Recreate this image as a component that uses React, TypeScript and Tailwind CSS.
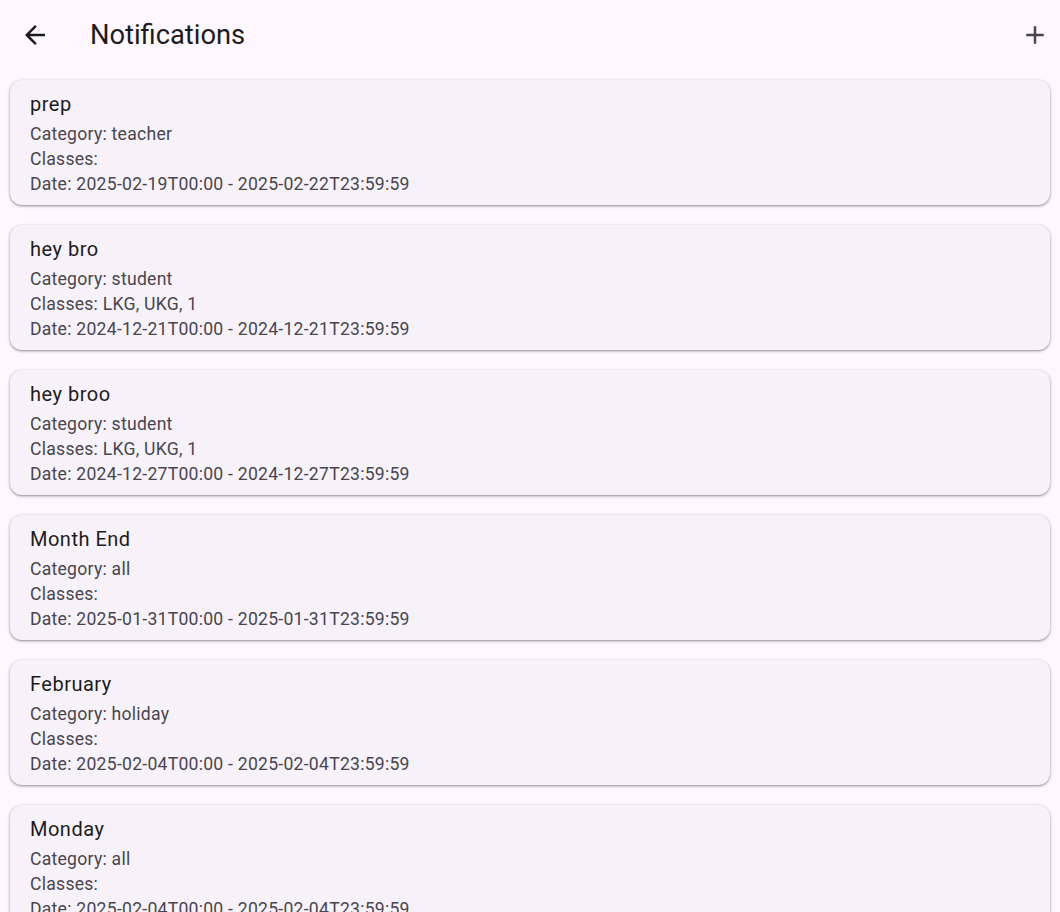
type Notice = {
  title: string;
  category: string;
  classes: string;
  date: string;
};

const notices: Notice[] = [
  { title: "prep", category: "teacher", classes: "", date: "2025-02-19T00:00 - 2025-02-22T23:59:59" },
  { title: "hey bro", category: "student", classes: "LKG, UKG, 1", date: "2024-12-21T00:00 - 2024-12-21T23:59:59" },
  { title: "hey broo", category: "student", classes: "LKG, UKG, 1", date: "2024-12-27T00:00 - 2024-12-27T23:59:59" },
  { title: "Month End", category: "all", classes: "", date: "2025-01-31T00:00 - 2025-01-31T23:59:59" },
  { title: "February", category: "holiday", classes: "", date: "2025-02-04T00:00 - 2025-02-04T23:59:59" },
  { title: "Monday", category: "all", classes: "", date: "2025-02-04T00:00 - 2025-02-04T23:59:59" },
];

function BackArrow() {
  return (
    <svg width="30" height="30" viewBox="0 0 24 24" fill="#1d1b20">
      <path d="M20 11H7.83l5.59-5.59L12 4l-8 8 8 8 1.41-1.41L7.83 13H20v-2z" />
    </svg>
  );
}

function AddIcon() {
  return (
    <svg width="30" height="30" viewBox="0 0 24 24" fill="#49454f">
      <path d="M19 13h-6v6h-2v-6H5v-2h6V5h2v6h6v2z" />
    </svg>
  );
}

export default function App() {
  return (
    <div className="h-[912px] overflow-hidden bg-[#fef7ff] font-['Roboto',sans-serif]">
      <header className="flex h-[70px] items-center">
        <button className="ml-5 flex h-[30px] w-[30px] items-center justify-center">
          <BackArrow />
        </button>
        <h1 className="ml-10 text-[27.3px] leading-8 text-[#1d1b20]">Notifications</h1>
        <button className="ml-auto mr-[10px] flex h-[30px] w-[30px] items-center justify-center">
          <AddIcon />
        </button>
      </header>
      <main className="flex flex-col gap-5 px-[10px] pt-[10px]">
        {notices.map((n) => (
          <div
            key={n.title}
            className="rounded-xl bg-[#f7f2fa] px-5 pb-2 pt-3 shadow-[0_1px_2px_rgba(0,0,0,0.3),0_1px_3px_1px_rgba(0,0,0,0.12)]"
          >
            <div className="text-[20px] leading-6 tracking-[0.5px] text-[#1d1b20]">{n.title}</div>
            <div className="mt-[6px] text-[17.6px] leading-[25px] tracking-[0.25px] text-[#49454f]">
              <div>Category: {n.category}</div>
              <div>Classes: {n.classes}</div>
              <div>Date: {n.date}</div>
            </div>
          </div>
        ))}
      </main>
    </div>
  );
}
